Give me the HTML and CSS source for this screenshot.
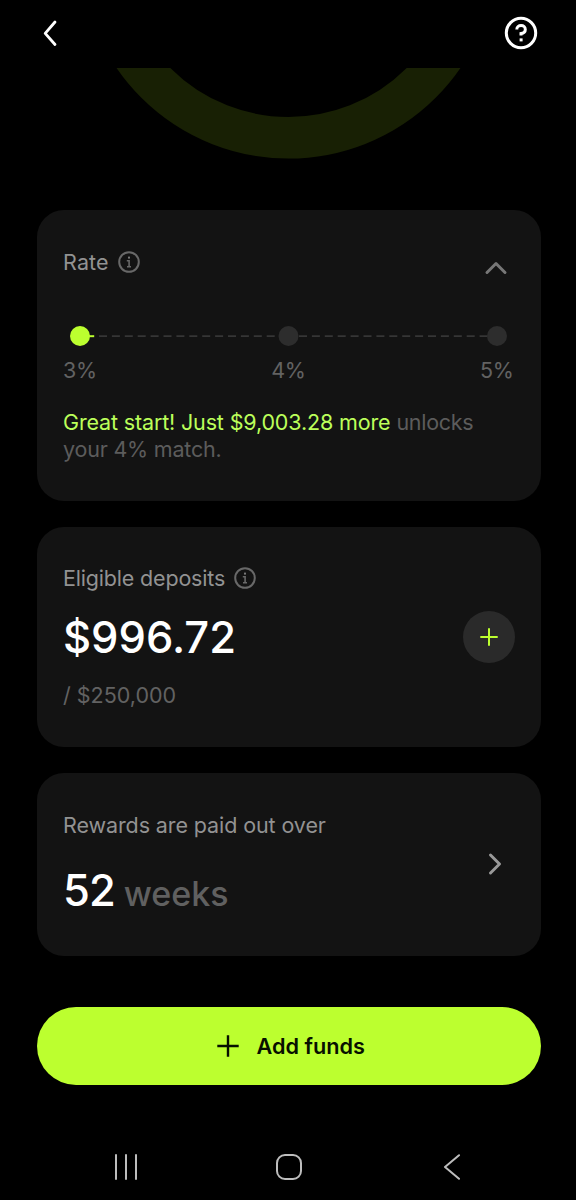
FILE: index.html
```html
<!DOCTYPE html>
<html lang="en">
<head>
<meta charset="utf-8">
<title>Match rewards</title>
<link rel="stylesheet" href="styles.css">
</head>
<body>
<div class="screen">
  <header class="topbar">
    <svg class="back" width="16" height="28" viewBox="0 0 16 28"><path d="M13 3 3.200 14.300 13 25.500"/></svg>
    <svg class="help" width="34" height="34" viewBox="0 0 34 34"><circle cx="17" cy="17" r="14.700"/><path d="M12.800 13.400c0-2.400 1.900-3.900 4.300-3.900s4.200 1.600 4.200 3.900c0 2.700-2.200 3.800-4.300 4.100v2.100"/><rect x="15.600" y="22.400" width="3" height="3"/></svg>
  </header>
  <svg class="ring" width="576" height="142" viewBox="0 68 576 142"><circle cx="288.500" cy="-49.800" r="187.600"/></svg>
  <main class="cards">
    <section class="card rate">
      <div class="row head">
        <div class="title"><span class="label t-rate">Rate</span><svg class="info" width="22" height="22" viewBox="0 0 22 22"><circle cx="11" cy="11" r="9.800"/><path d="M8.800 9.700h2.300v6M9 15.700h4"/><rect x="10" y="5.600" width="2" height="2"/></svg></div>
        <svg class="chevron up" width="24" height="16" viewBox="0 0 24 16"><path d="m3 12.500 9-9 9 9"/></svg>
      </div>
      <svg class="track" width="452" height="22" viewBox="0 0 452 22"><path class="dash" d="M36 11.200H216M236 11.200H426"/><path class="fill" d="M22 11.200h9.200"/><circle class="on" cx="17" cy="11" r="10"/><circle class="off" cx="225.500" cy="11" r="10"/><circle class="off" cx="434" cy="11" r="10"/></svg>
      <div class="row ticks"><span>3%</span><span>4%</span><span>5%</span></div>
      <p class="note"><span class="lime">Great start! Just $9,003.28 more</span> <span class="t-unlocks">unlocks</span><br><span class="t-match">your 4% match.</span></p>
    </section>
    <section class="card deposits">
      <div class="title"><span class="label t-dep">Eligible deposits</span><svg class="info" width="22" height="22" viewBox="0 0 22 22"><circle cx="11" cy="11" r="9.800"/><path d="M8.800 9.700h2.300v6M9 15.700h4"/><rect x="10" y="5.600" width="2" height="2"/></svg></div>
      <div class="row">
        <span class="amount">$996.72</span>
        <button class="plus" aria-label="Add"><svg width="18" height="18" viewBox="0 0 18 18"><path d="M9 .3v17.400M.3 9h17.400"/></svg></button>
      </div>
      <div class="limit">/ $250,000</div>
    </section>
    <section class="card payout">
      <div>
        <div class="label t-pay">Rewards are paid out over</div>
        <div class="weeks"><span class="num">52</span><span class="unit">weeks</span></div>
      </div>
      <svg class="chevron right" width="16" height="24" viewBox="0 0 16 24"><path d="m3.500 3 9 9-9 9"/></svg>
    </section>
  </main>
  <button class="add"><svg width="22" height="22" viewBox="0 0 22 22"><path d="M11 .3v21.400M.3 11h21.400"/></svg><span>Add funds</span></button>
  <nav class="navbar">
    <svg width="26" height="26" viewBox="0 0 26 26"><path d="M3 1v24M13 1v24M23 1v24"/></svg>
    <svg class="home" width="28" height="28" viewBox="0 0 28 28"><rect x="2" y="2" width="24" height="24" rx="8"/></svg>
    <svg width="18" height="26" viewBox="0 0 18 26"><path d="M16 1.200 2 13l14 11.800"/></svg>
  </nav>
</div>
</body>
</html>
```
FILE: styles.css
```css
* { box-sizing: border-box; }
body { margin: 0; background: #000; font-family: Inter, "Liberation Sans", sans-serif; }
svg { display: block; flex: none; fill: none; }
button { border: 0; padding: 0; font: inherit; }
.screen { width: 576px; height: 1200px; overflow: hidden; display: flex; flex-direction: column; }
.topbar { height: 68px; padding: 16px 38px 0 42px; display: flex; justify-content: space-between; }
.back { margin-top: 3px; stroke: #fff; stroke-width: 2.800; stroke-linecap: round; stroke-linejoin: round; }
.help { stroke: #fff; stroke-width: 3; }
.help rect { fill: #fff; stroke: none; }
.ring { stroke: #182004; stroke-width: 41.600; }
.cards { width: 503.500px; margin-left: 37px; display: flex; flex-direction: column; gap: 26px; }
.card { background: #131313; border-radius: 27px; padding: 0 26px; }
.row { display: flex; justify-content: space-between; align-items: center; }
.rate { height: 290.500px; padding-top: 38px; }
.head { height: 28px; }
.title { display: flex; align-items: center; gap: 9px; height: 28px; }
.label { color: #929292; font-size: 21.500px; line-height: 28px; white-space: nowrap; }
.t-rate { letter-spacing: .15px; }
.t-dep { letter-spacing: -.18px; }
.t-pay { letter-spacing: -.1px; }
.info { stroke: #686868; stroke-width: 2; }
.info path { stroke-width: 1.600; }
.info rect { fill: #777; stroke: none; }
.chevron { stroke: #777; stroke-width: 3; stroke-linecap: round; stroke-linejoin: round; }
.up { margin: 12px 7px 0 0; }
.track { margin-top: 49px; }
.dash { stroke: #363636; stroke-width: 1.800; stroke-dasharray: 8 4.900; }
.fill { stroke: #bcff2f; stroke-width: 2; }
.on { fill: #bcff2f; }
.off { fill: #2d2d2d; }
.ticks { margin: 9px 1px 0 0; height: 28px; color: #626262; font-size: 21.500px; letter-spacing: -.3px; }
.note { margin: 25px 0 0; font-size: 21.500px; line-height: 26.600px; color: #5c5c5c; white-space: nowrap; }
.lime { color: #bcff5a; letter-spacing: -.15px; }
.t-unlocks { letter-spacing: -.3px; }
.t-match { letter-spacing: -.2px; }
.deposits { height: 220.500px; padding-top: 37.500px; }
.amount { color: #fff; font-size: 43.500px; line-height: 60px; font-weight: 500; }
.deposits .row { height: 60px; margin-top: 15px; }
.plus { width: 52px; height: 52px; border-radius: 50%; background: #2a2a2a; display: flex; align-items: center; justify-content: center; }
.plus svg { stroke: #bcff2f; stroke-width: 2; }
.limit { color: #626262; font-size: 21.500px; line-height: 28px; margin-top: 14px; }
.payout { height: 182.500px; padding-top: 38px; display: flex; justify-content: space-between; }
.weeks { display: flex; align-items: baseline; gap: 9px; margin-top: 21px; line-height: 60px; }
.num { color: #fff; font-size: 43.500px; font-weight: 500; letter-spacing: -1px; }
.unit { color: #606060; font-size: 34px; font-weight: 500; }
.right { margin: 41px 12px 0 0; stroke: #999; }
.add { width: 503.500px; height: 77.500px; margin: 51.700px 0 0 37px; padding-left: 4px; border-radius: 39px; background: #bcff2f; color: #071000; display: flex; align-items: center; justify-content: center; gap: 18px; font-size: 21.700px; font-weight: 600; }
.add svg { stroke: #071000; stroke-width: 2.400; }
.navbar { margin-top: 68px; padding: 0 115px 0 113px; display: flex; align-items: center; justify-content: space-between; }
.navbar svg { stroke: #bdbdbd; stroke-width: 2; stroke-linecap: round; stroke-linejoin: round; }
.navbar .home { margin-right: 4px; }
```
